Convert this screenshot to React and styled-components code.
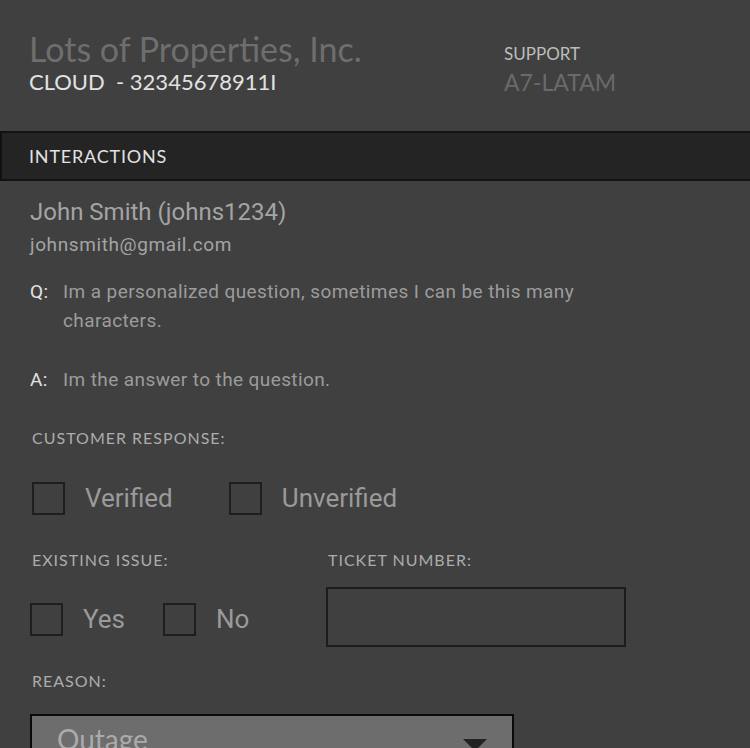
import React from 'react';
import styled, { createGlobalStyle } from 'styled-components';

const GlobalStyle = createGlobalStyle`
  html, body {
    margin: 0;
    padding: 0;
    background: #404040;
  }
  body {
    font-family: Lato, "Open Sans", sans-serif;
  }
`;

const Page = styled.div`
  width: 750px;
  height: 748px;
  overflow: hidden;
  background: #404040;
`;

const Header = styled.header`
  height: 131px;
  box-sizing: border-box;
  padding: 30px 0 0 29px;
  display: grid;
  grid-template-columns: 475px 1fr;
`;

const Company = styled.div`
  font-size: 34px;
  line-height: 38px;
  color: #6e6e6e;
`;

const Account = styled.div`
  font-size: 22px;
  line-height: 28px;
  color: #e2e2e2;
`;

const SupportLabel = styled.div`
  margin-top: 14px;
  font-size: 17px;
  line-height: 20px;
  color: #bdbdbd;
`;

const SupportValue = styled.div`
  margin-top: 4px;
  font-size: 23px;
  line-height: 28px;
  color: #6a6a6a;
`;

const SectionBar = styled.div`
  height: 50px;
  box-sizing: border-box;
  border: 2px solid #121212;
  border-right: none;
  background: #242424;
  color: #e2e2e2;
  font-size: 18px;
  letter-spacing: 0.8px;
  display: flex;
  align-items: center;
  padding-left: 27px;
`;

const Content = styled.div`
  padding: 16px 0 0 30px;
  font-family: Roboto, "Noto Sans", sans-serif;
`;

const Name = styled.div`
  font-size: 24px;
  line-height: 30px;
  color: #a4a4a4;
`;

const Email = styled.div`
  margin-top: 5px;
  font-size: 19px;
  line-height: 26px;
  letter-spacing: 0.6px;
  color: #a4a4a4;
`;

const QA = styled.div`
  display: grid;
  grid-template-columns: 33px 540px;
  margin-top: ${p => p.$top}px;
  font-size: 19px;
  line-height: 29px;
  letter-spacing: 0.4px;
  color: #9c9c9c;
`;

const QALabel = styled.span`
  color: #e2e2e2;
`;

const Label = styled.div`
  font-family: Lato, "Open Sans", sans-serif;
  font-size: 16px;
  line-height: 18px;
  letter-spacing: 1px;
  color: #acacac;
  margin-top: ${p => p.$top || 0}px;
  padding-left: 2px;
`;

const CheckRow = styled.div`
  display: flex;
  align-items: center;
  gap: ${p => p.$gap}px;
  margin-top: ${p => p.$top}px;
  padding-left: ${p => p.$indent || 0}px;
`;

const Check = styled.label`
  display: flex;
  align-items: center;
  gap: 20px;
  font-size: 26px;
  line-height: 33px;
  color: #9a9a9a;
`;

const Box = styled.span`
  width: 33px;
  height: 33px;
  box-sizing: border-box;
  border: 2px solid #1e1e1e;
`;

const TwoCol = styled.div`
  display: grid;
  grid-template-columns: 296px 300px;
  margin-top: 36px;
`;

const TicketInput = styled.div`
  margin-top: 18px;
  width: 300px;
  height: 60px;
  box-sizing: border-box;
  border: 2px solid #1c1c1c;
`;

const Select = styled.div`
  margin-top: 24px;
  width: 484px;
  height: 60px;
  box-sizing: border-box;
  border: 2px solid #0a0a0a;
  background: #6d6d6e;
  display: flex;
  justify-content: space-between;
  padding: 6px 25px 0 25px;
  font-family: Lato, "Open Sans", sans-serif;
  font-size: 28px;
  color: #ababab;
`;

const Arrow = styled.span`
  margin-top: 17px;
  width: 0;
  height: 0;
  border-left: 12px solid transparent;
  border-right: 12px solid transparent;
  border-top: 12px solid #222;
`;

const App = () => (
  <Page>
    <GlobalStyle />
    <Header>
      <div>
        <Company>Lots of Properties, Inc.</Company>
        <Account>CLOUD&nbsp; - 32345678911I</Account>
      </div>
      <div>
        <SupportLabel>SUPPORT</SupportLabel>
        <SupportValue>A7-LATAM</SupportValue>
      </div>
    </Header>
    <SectionBar>INTERACTIONS</SectionBar>
    <Content>
      <Name>John Smith (johns1234)</Name>
      <Email>johnsmith@gmail.com</Email>
      <QA $top={19}>
        <QALabel>Q:</QALabel>
        <span>Im a personalized question, sometimes I can be this many characters.</span>
      </QA>
      <QA $top={30}>
        <QALabel>A:</QALabel>
        <span>Im the answer to the question.</span>
      </QA>
      <Label $top={35}>CUSTOMER RESPONSE:</Label>
      <CheckRow $gap={56} $top={35} $indent={2}>
        <Check><Box />Verified</Check>
        <Check><Box />Unverified</Check>
      </CheckRow>
      <TwoCol>
        <div>
          <Label>EXISTING ISSUE:</Label>
          <CheckRow $gap={38} $top={34}>
            <Check><Box />Yes</Check>
            <Check><Box />No</Check>
          </CheckRow>
        </div>
        <div>
          <Label>TICKET NUMBER:</Label>
          <TicketInput />
        </div>
      </TwoCol>
      <Label $top={25}>REASON:</Label>
      <Select>
        <span>Outage</span>
        <Arrow />
      </Select>
    </Content>
  </Page>
);

export default App;
